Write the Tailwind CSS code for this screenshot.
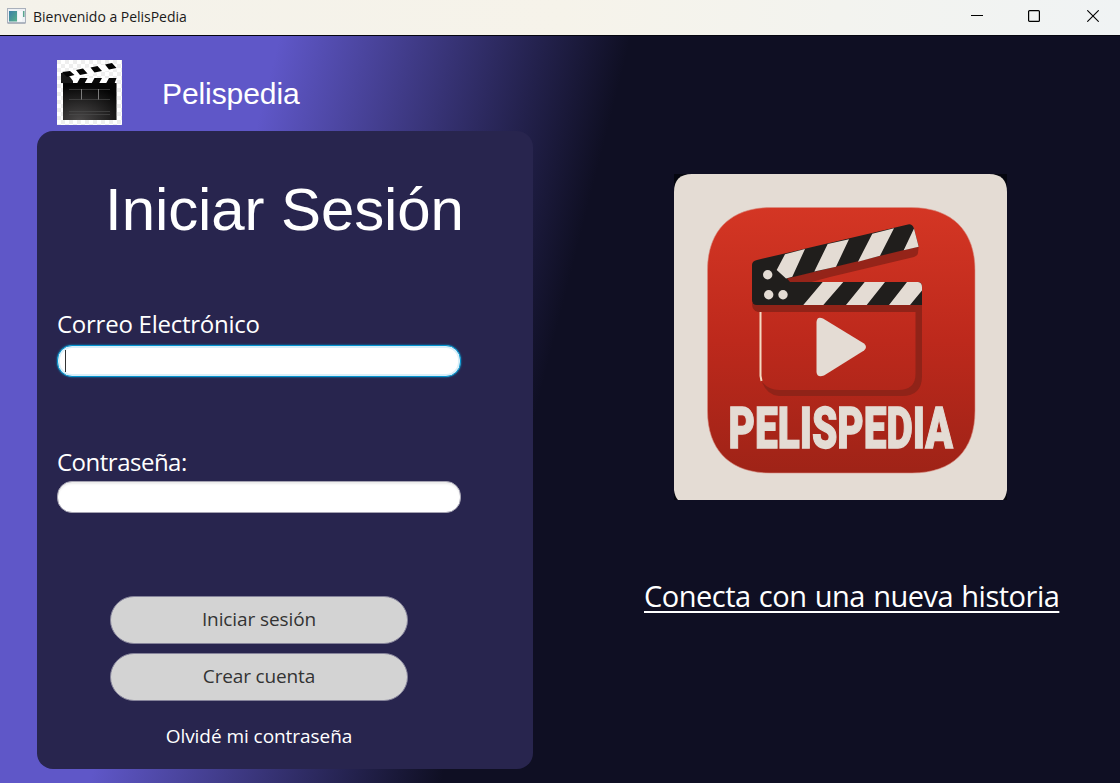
<!DOCTYPE html>
<html lang="es">
<head>
<meta charset="utf-8">
<title>Bienvenido a PelisPedia</title>
<script src="https://cdn.jsdelivr.net/npm/@tailwindcss/browser@4"></script>
</head>
<body class="flex h-[783px] w-[1120px] flex-col overflow-hidden font-['Open_Sans','Noto_Sans',sans-serif]">
<header class="flex h-[36px] shrink-0 items-center border-b border-[#05050f] bg-linear-to-r from-[#f4f2ea] via-[#f6f3ea] to-[#f0f3f4] pl-[7px]">
  <svg class="-mt-[3px] h-[16px] w-[19px]" viewBox="0 0 19 16">
    <defs><linearGradient id="app" x2="1" y2="1"><stop stop-color="#3b7fa8"/><stop offset="1" stop-color="#58b08a"/></linearGradient></defs>
    <rect x=".5" y=".5" width="18" height="14.5" fill="#eef1f5" stroke="#a9b0bb"/>
    <rect x="2" y="3" width="8" height="10.500" fill="url(#app)"/>
    <rect x="11" y="3" width="4" height="10.500" fill="#f8f9fa"/><rect x="16" y="3" width="1.500" height="6" fill="#5aa58f"/>
    <path d="M1 15h17" stroke="#8f98a8"/>
  </svg>
  <span class="-mt-[2px] ml-[7px] text-[14px] leading-5 tracking-[-0.02px] text-[#1a1a1a]">Bienvenido a PelisPedia</span>
  <div class="mr-[21px] ml-auto flex items-center gap-[46px]">
    <svg class="-mt-[4px] -ml-px size-[12px]" viewBox="0 0 12 12"><path d="M0 5.500h12" stroke="#000"/></svg>
    <svg class="-mt-[3px] mr-px -ml-px size-[12px]" viewBox="0 0 12 12"><rect x=".6" y=".6" width="10.800" height="10.800" rx="1" fill="none" stroke="#000" stroke-width="1.200"/></svg>
    <svg class="-mt-[3px] size-[12px]" viewBox="0 0 12 12"><path d="M.3 .3l11.400 11.400M11.700 .3l-11.400 11.400" stroke="#000" stroke-width="1.100"/></svg>
  </div>
</header>

<main class="flex flex-1 bg-[linear-gradient(104.3deg,#5f57c8_271px,#0f0f23_612px)]">
  <section class="ml-[37px] flex w-[496px] flex-col">
    <div class="mt-[24px] flex h-[65px] pl-[20px]">
      <svg class="size-[65px]" viewBox="0 0 65 65">
        <defs>
          <pattern id="chk" width="8" height="8" patternUnits="userSpaceOnUse"><rect width="8" height="8" fill="#fff"/><path d="M0 0h4v4H0zM4 4h4v4H4z" fill="#eee"/></pattern>
          <radialGradient id="slate" cx=".3" cy="1" r=".95"><stop stop-color="#4a4848"/><stop offset="1" stop-color="#050505"/></radialGradient>
        </defs>
        <rect width="65" height="65" fill="url(#chk)"/>
        <path d="M5 12L57 3L60 9L16 18H60V23H14L5 22Z" fill="#fff"/>
        <path d="M4 13l4 0 5 4 3 4v2H4z" fill="#1a1a1a"/>
        <path d="M5 12l8-1 4.500 4-7.500 2zM19 10l7-1.500 4.500 5-7.500 1.500zM33.500 7.500l7-1.500 4.500 5-7.500 1.500zM48 4.500l7-1.500 4.500 5-7.500 1.500z" fill="#050505"/>
        <path d="M23 18h7.500l-3 5.500h-7.500zM37.500 18h7.500l-3 5.500h-7.500zM52 18h7.500l-2 5.500H49z" fill="#080808"/>
        <rect x="6" y="23" width="53.500" height="37" fill="url(#slate)"/>
        <path d="M12 29.500h41M12 39.500h41M12 51.500h41M12 54.500h41" stroke="#4a4a4a" stroke-width=".7"/>
        <path d="M24.500 29v10.500M41.500 29v10.500" stroke="#888" stroke-width=".9"/>
      </svg>
      <span class="ml-[40px] pt-[16px] font-['Liberation_Sans',Arial,sans-serif] text-[30px] leading-9 tracking-[-0.08px] text-white">Pelispedia</span>
    </div>

    <div class="mt-[6px] flex h-[638px] flex-col rounded-[16px] bg-[#28254e] pl-[20px]">
      <h1 class="mt-[43px] h-[72px] w-[455px] text-center font-['Liberation_Sans',Arial,sans-serif] text-[60px] leading-[72px] tracking-[-0.1px] text-white">Iniciar Sesión</h1>
      <label class="mt-[62px] h-[32px] text-[24px] leading-8 tracking-[-0.25px] text-white">Correo Electrónico</label>
      <div class="mt-[5px] flex h-[32px] w-[404px] items-center rounded-[15px] border border-[#0493cf] bg-white pl-[7px] shadow-[inset_0_0_0_2px_#d9eff9,0_0_2px_#039ed3]">
        <span class="h-[22px] w-px bg-[#333]"></span>
      </div>
      <label class="mt-[69px] h-[32px] text-[24px] leading-8 tracking-[-0.5px] text-white">Contraseña:</label>
      <div class="mt-[3px] h-[32px] w-[404px] rounded-[15px] border border-[#a5a3b2] bg-white shadow-[inset_0_2px_2px_#ededed]"></div>
      <div class="mt-[83px] ml-[53px] flex w-[298px] flex-col items-center gap-[9px]">
        <button class="h-[48px] w-full rounded-[24px] border border-[#85839a] bg-[#d3d3d3] pb-[3px] text-[19px] leading-6 tracking-[-0.1px] text-[#333]">Iniciar sesión</button>
        <button class="h-[48px] w-full rounded-[24px] border border-[#85839a] bg-[#d3d3d3] pb-[3px] text-[19px] leading-6 tracking-[-0.15px] text-[#333]">Crear cuenta</button>
        <a class="mt-[12px] text-[19px] leading-7 tracking-[-0.05px] whitespace-nowrap text-white">Olvidé mi contraseña</a>
      </div>
    </div>
  </section>

  <section class="ml-[111px] flex w-[430px] flex-col items-start">
    <svg class="mt-[138px] ml-[30px] h-[326px] w-[333px] overflow-visible" viewBox="674 174 333 326">
      <defs>
        <linearGradient id="red" x2="0" y2="1"><stop stop-color="#d43624"/><stop offset=".5" stop-color="#bd291c"/><stop offset="1" stop-color="#9f2317"/></linearGradient>
      </defs>
      <rect x="674" y="174" width="333" height="326" fill="#05060f"/>
      <path d="M674 192Q674 174 692 174H989Q1007 174 1007 192V490Q1006 497 1003 500H678Q675 497 674 490Z" fill="#e4dcd4"/>
      <path d="M771 207.500H911C953 207.500 975 232 975 270V411C975 450 953 473 912 473H770C730 473 707.500 450 707.500 411V270C707.500 230 731 207.500 771 207.500Z" fill="url(#red)" stroke="#d98f83" stroke-width=".6"/>
      <path d="M787 278L918.700 246L918 253Q917.500 256 914 257L830 277L808 283H789Z" fill="#952419"/>
      <path d="M752 303H922V376Q922 396 902 396H779Q767 395 762 382Q769 390 779 390H898Q915.500 390 915.500 374V312H758Q752 311 752 303Z" fill="#902318"/>
      <path d="M760.500 312V376L761.500 381" fill="none" stroke="#f3d9c2" stroke-width="2"/>
      <path d="M752 265Q752 261 757 260L908 224.500Q912 223.500 914 228.500L918.700 246.500L787 278.500L790 282H918Q922 282 922 287V305H757Q752 305 752 300Z" fill="#201e1c"/>
      <g fill="#e4dcd4">
        <path d="M785 254.300L805 249L792.300 276.700L786 278.500L776.700 270ZM827.700 244L849 239.300L836 266.700L814.300 271.500ZM872.300 233.700L894 228.300L880 255.700L858 261.700ZM914 228.500L918.700 246.700L903.700 250.300Z"/>
        <path d="M822.700 282H843.300L823.300 305H803.300ZM864.700 282H885L866.700 305H846ZM907 282H918Q922 282.500 922 287V290.500L910 305H889Z"/>
        <circle cx="767.700" cy="274.700" r="4.700"/><circle cx="768.700" cy="294.700" r="4.700"/><circle cx="783" cy="294.700" r="4.700"/>
        <path d="M816.500 322Q817 316 823 318.500L864 343.500Q868 347 864 350.500L824 375.500Q817 378 816.500 372Z"/>
      </g>
      <text x="728.500" y="447.500" textLength="224.500" lengthAdjust="spacingAndGlyphs" font-family="Roboto, sans-serif" font-weight="900" font-size="58" fill="#e4dcd4" stroke="#e4dcd4" stroke-width="1.300">PELISPEDIA</text>
    </svg>
    <a class="mt-[74px] h-[44px] text-[29px] leading-[44px] tracking-[-0.5px] [word-spacing:1.2px] whitespace-nowrap text-white underline decoration-2 underline-offset-[4px]">Conecta con una nueva historia</a>
  </section>
</main>
</body>
</html>
